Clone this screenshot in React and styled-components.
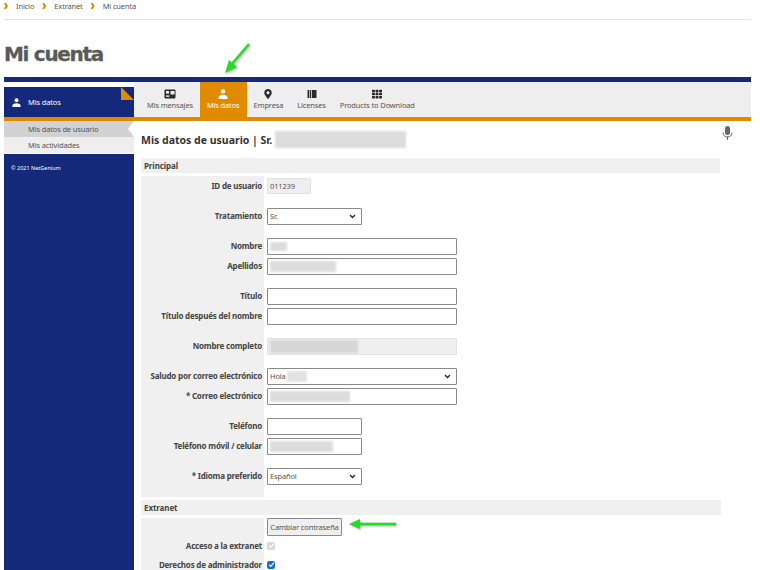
import React from 'react';
import styled, { createGlobalStyle } from 'styled-components';
import { FaMapMarkerAlt, FaTh } from 'react-icons/fa';

const Global = createGlobalStyle`
    html, body {
        margin: 0;
        padding: 0;
        background: #fff;
        height: 570px;
        overflow: hidden;
    }
    body {
        font-family: "Noto Sans", sans-serif;
        font-size: 7.5px;
        letter-spacing: -0.15px;
        color: #444;
    }
`;

const Page = styled.div`
    position: relative;
    width: 760px;
    height: 570px;
    overflow: hidden;
    padding: 0 9px 0 4px;
    box-sizing: border-box;
`;
const Breadcrumb = styled.div`
    display: flex;
    align-items: flex-start;
    padding-top: 2px;
    box-sizing: border-box;
    gap: 8px;
    border-bottom: 1px solid #e4e4e4;
    height: 20px;
    line-height: 8px;
    color: #555;
`;
const Chevron = styled.span`
    width: 4px;
    height: 6px;
    margin-top: 1px;
    background: #e08a00;
    clip-path: polygon(0 0, 50% 0, 100% 50%, 50% 100%, 0 100%, 35% 50%);
`;
const Title = styled.h1`
    margin: 0;
    height: 57px;
    line-height: 68px;
    font-family: "DejaVu Sans", sans-serif;
    font-size: 20px;
    letter-spacing: -1.3px;
    -webkit-text-stroke: 0.3px #5a5a5a;
    font-weight: 700;
    color: #5a5a5a;
`;
const TopBar = styled.div`
    height: 5px;
    background: #14297a;
`;
const Main = styled.div`
    display: flex;
    align-items: stretch;
`;
const Sidebar = styled.aside`
    width: 130px;
    flex: none;
    height: 500px;
    padding-top: 5px;
    box-sizing: border-box;
    display: flex;
    flex-direction: column;
`;
const SideHead = styled.div`
    position: relative;
    height: 30px;
    background: #14297a;
    color: #fff;
    display: flex;
    align-items: center;
    gap: 6px;
    padding-left: 7px;
    svg {
        width: 11px;
        height: 9px;
    }
`;
const Corner = styled.span`
    position: absolute;
    right: 0;
    top: 0;
    width: 13px;
    height: 13px;
    background: #e08a00;
    clip-path: polygon(0 0, 100% 100%, 0 100%);
`;
const OrangeBar = styled.div`
    height: 4px;
    background: #e08a00;
    flex: none;
`;
const SideItem = styled.div`
    position: relative;
    height: 16px;
    line-height: 17px;
    padding-left: 24px;
    color: #555;
    background: ${(p) => p.$active ? '#d2d2d2' : '#eeeeee'};
    ${(p) => p.$active && `
        &::after {
            content: '';
            position: absolute;
            right: 0;
            top: 0;
            border-style: solid;
            border-width: 8px 6px 8px 0;
            border-color: transparent #fff transparent transparent;
        }
    `}
`;
const SideFoot = styled.div`
    margin-top: 1px;
    flex: 1;
    background: #14297a;
    color: #fff;
    font-size: 5.5px;
    letter-spacing: 0;
    padding: 10px 7px;
`;
const Content = styled.div`
    flex: 1;
    min-width: 0;
`;
const Tabs = styled.nav`
    display: flex;
    height: 35px;
    background: #eeeeee;
    padding-left: 6px;
`;
const Tab = styled.div`
    padding: 0 7px 7px;
    display: flex;
    flex-direction: column;
    align-items: center;
    justify-content: flex-end;
    gap: 2px;
    line-height: 9px;
    white-space: nowrap;
    color: ${(p) => p.$active ? '#fff' : '#555'};
    background: ${(p) => p.$active ? '#e08a00' : 'transparent'};
    svg {
        color: ${(p) => p.$active ? '#fff' : '#2a2a2a'};
        width: 12px;
        height: 10px;
    }
`;
const Body = styled.div`
    position: relative;
    padding: 0 31px 0 7px;
`;
const Mic = styled.span`
    position: absolute;
    right: 18px;
    top: 5px;
    color: #666;
    svg {
        width: 11px;
        height: 14px;
        display: block;
    }
`;
const Heading = styled.h2`
    margin: 0;
    height: 37px;
    display: flex;
    align-items: center;
    font-size: 10.5px;
    letter-spacing: 0;
    font-weight: 700;
    color: #333;
    gap: 3px;
    box-sizing: border-box;
`;
const Smudge = styled.span`
    display: block;
    width: ${(p) => p.$w}px;
    height: ${(p) => p.$h || 11}px;
    margin-left: ${(p) => p.$left || 0}px;
    background: ${(p) => p.$color || '#dcdcdc'};
    filter: blur(1px);
    flex: none;
`;
const Section = styled.div`
    height: 15px;
    line-height: 15px;
    padding-left: 3px;
    background: #f0f0f0;
    font-size: 8px;
    letter-spacing: -0.1px;
    font-weight: 700;
    color: #444;
`;
const Rows = styled.div`
    margin-top: ${(p) => p.$top}px;
    width: 580px;
`;
const Row = styled.div`
    display: flex;
    height: ${(p) => p.$h || 20}px;
`;
const Label = styled.div`
    width: 123px;
    flex: none;
    box-sizing: border-box;
    padding-right: 2px;
    background: #f0f0f0;
    text-align: right;
    white-space: nowrap;
    font-size: 8px;
    letter-spacing: -0.2px;
    line-height: ${(p) => p.$h || 20}px;
    font-weight: 700;
    color: #444;
`;
const Gap = styled.div`
    height: ${(p) => p.$h || 10}px;
    width: 123px;
    background: #f0f0f0;
`;
const Cell = styled.div`
    display: flex;
    align-items: center;
    padding-left: 3px;
`;
const Field = styled.div`
    width: ${(p) => p.$w}px;
    height: ${(p) => p.$h || 17}px;
    box-sizing: border-box;
    display: flex;
    align-items: center;
    justify-content: space-between;
    padding: 0 2px;
    overflow: hidden;
    color: #555;
    background: ${(p) => p.$off ? '#efefef' : '#fff'};
    border: 1px solid ${(p) => p.$off ? '#e2e2e2' : '#8a8a8a'};
    border-radius: 1px;
`;
const FieldValue = styled.span`
    display: flex;
    align-items: center;
`;
const Arrow = styled.svg`
    width: 7px;
    height: 5px;
    flex: none;
    margin-right: 3px;
`;
const Button = styled.div`
    width: 75px;
    height: 18px;
    box-sizing: border-box;
    display: flex;
    align-items: center;
    justify-content: center;
    white-space: nowrap;
    background: #efefef;
    border: 1px solid #8a8a8a;
    border-radius: 1px;
    color: #555;
`;
const Check = styled.span`
    width: 8px;
    height: 8px;
    border-radius: 2px;
    box-sizing: border-box;
    display: flex;
    align-items: center;
    justify-content: center;
    background: ${(p) => p.$on ? '#0b6fe0' : '#d8d8d8'};
    svg {
        width: 7px;
        height: 7px;
    }
`;
const Overlay = styled.svg`
    position: absolute;
    left: 0;
    top: 0;
    width: 760px;
    height: 570px;
    pointer-events: none;
    filter: drop-shadow(1px 1px 1px rgba(0, 0, 0, 0.35));
`;

const Caret = () => (
    <Arrow viewBox="0 0 8 6">
        <path d="M1 1.2 L4 4.2 L7 1.2" fill="none" stroke="#222" strokeWidth="1.5" />
    </Arrow>
);

const Tick = () => (
    <svg viewBox="0 0 8 8">
        <path d="M1.2 4.2 L3.2 6.2 L6.8 1.8" fill="none" stroke="#fff" strokeWidth="1.4" />
    </svg>
);

const PersonIcon = () => (
    <svg viewBox="0 0 12 10" fill="currentColor">
        <circle cx="6" cy="2.4" r="2.2" />
        <path d="M1.5 10 V8.4 C1.5 6.6 4 5.8 6 5.8 C8 5.8 10.5 6.6 10.5 8.4 V10 Z" />
    </svg>
);

const CardIcon = () => (
    <svg viewBox="0 0 12 10">
        <rect x="0.5" y="0.5" width="11" height="9" rx="1" fill="currentColor" />
        <rect x="2" y="2" width="3" height="2.6" fill="#eee" />
        <rect x="6.5" y="2" width="4" height="3.5" fill="#eee" />
        <rect x="2" y="6.4" width="3.4" height="1.4" fill="#eee" />
    </svg>
);

const BarsIcon = () => (
    <svg viewBox="0 0 12 10" fill="currentColor">
        <rect x="1.5" y="1" width="1.8" height="8" />
        <rect x="4" y="1" width="1.2" height="8" />
        <rect x="6" y="1" width="4.5" height="8" />
    </svg>
);

const MicIcon = () => (
    <svg viewBox="0 0 11 14" fill="currentColor">
        <rect x="3" y="0" width="5" height="9" rx="2.5" />
        <path d="M1 6.5 C1 9.5 3 11 5.5 11 C8 11 10 9.5 10 6.5" fill="none" stroke="currentColor" strokeWidth="1" />
        <rect x="5" y="10.5" width="1" height="3.5" />
    </svg>
);

const FormRow = ({ label, children, h }) => (
    <Row $h={h}>
        <Label $h={h}>{label}</Label>
        <Cell>{children}</Cell>
    </Row>
);

export default function App() {
    return (
        <Page>
            <Global />
            <Breadcrumb>
                <Chevron />
                <span>Inicio</span>
                <Chevron />
                <span>Extranet</span>
                <Chevron />
                <span>Mi cuenta</span>
            </Breadcrumb>
            <Title>Mi cuenta</Title>
            <TopBar />
            <Main>
                <Sidebar>
                    <SideHead>
                        <PersonIcon />
                        <span>Mis datos</span>
                        <Corner />
                    </SideHead>
                    <OrangeBar />
                    <SideItem $active>Mis datos de usuario</SideItem>
                    <SideItem>Mis actividades</SideItem>
                    <SideFoot>© 2021 NetGenium</SideFoot>
                </Sidebar>
                <Content>
                    <Tabs>
                        <Tab><CardIcon /><span>Mis mensajes</span></Tab>
                        <Tab $active><PersonIcon /><span>Mis datos</span></Tab>
                        <Tab><FaMapMarkerAlt /><span>Empresa</span></Tab>
                        <Tab><BarsIcon /><span>Licenses</span></Tab>
                        <Tab><FaTh /><span>Products to Download</span></Tab>
                    </Tabs>
                    <OrangeBar />
                    <Body>
                        <Mic><MicIcon /></Mic>
                        <Heading>
                            <span>Mis datos de usuario | Sr.</span>
                            <Smudge $w={131} $h={17} />
                        </Heading>
                        <Section>Principal</Section>
                        <Rows $top={3}>
                            <FormRow label="ID de usuario"><Field $w={44} $h={16} $off>011239</Field></FormRow>
                            <Gap />
                            <FormRow label="Tratamiento"><Field $w={95}>Sr.<Caret /></Field></FormRow>
                            <Gap />
                            <FormRow label="Nombre"><Field $w={190}><Smudge $w={17} $h={9} /></Field></FormRow>
                            <FormRow label="Apellidos"><Field $w={190}><Smudge $w={66} /></Field></FormRow>
                            <Gap />
                            <FormRow label="Título"><Field $w={190} /></FormRow>
                            <FormRow label="Título después del nombre"><Field $w={190} /></FormRow>
                            <Gap />
                            <FormRow label="Nombre completo"><Field $w={190} $off><Smudge $w={88} $h={13} $color="#d6d6d6" /></Field></FormRow>
                            <Gap />
                            <FormRow label="Saludo por correo electrónico">
                                <Field $w={190}>
                                    <FieldValue>Hola<Smudge $w={20} $left={1} $color="#e2e2e2" /></FieldValue>
                                    <Caret />
                                </Field>
                            </FormRow>
                            <FormRow label="* Correo electrónico"><Field $w={190}><Smudge $w={80} /></Field></FormRow>
                            <Gap />
                            <FormRow label="Teléfono"><Field $w={95} /></FormRow>
                            <FormRow label="Teléfono móvil / celular"><Field $w={95}><Smudge $w={63} /></Field></FormRow>
                            <Gap />
                            <FormRow label="* Idioma preferido"><Field $w={95}>Español<Caret /></Field></FormRow>
                            <Gap $h={11} />
                        </Rows>
                        <Rows $top={3}>
                            <Section>Extranet</Section>
                        </Rows>
                        <Rows $top={3}>
                            <FormRow label="" h={18}><Button>Cambiar contraseña</Button></FormRow>
                            <FormRow label="Acceso a la extranet" h={19}><Check><Tick /></Check></FormRow>
                            <FormRow label="Derechos de administrador" h={19}><Check $on><Tick /></Check></FormRow>
                        </Rows>
                    </Body>
                </Content>
            </Main>
            <Overlay viewBox="0 0 760 570">
                <path d="M249 44 L231 65" stroke="#22dd22" strokeWidth="2.5" fill="none" />
                <path d="M225 73 L229 60 L237 67 Z" fill="#22dd22" />
                <path d="M396 524 L358 524" stroke="#22dd22" strokeWidth="2.5" fill="none" />
                <path d="M349 524 L360 519 L360 529 Z" fill="#22dd22" />
            </Overlay>
        </Page>
    );
}
